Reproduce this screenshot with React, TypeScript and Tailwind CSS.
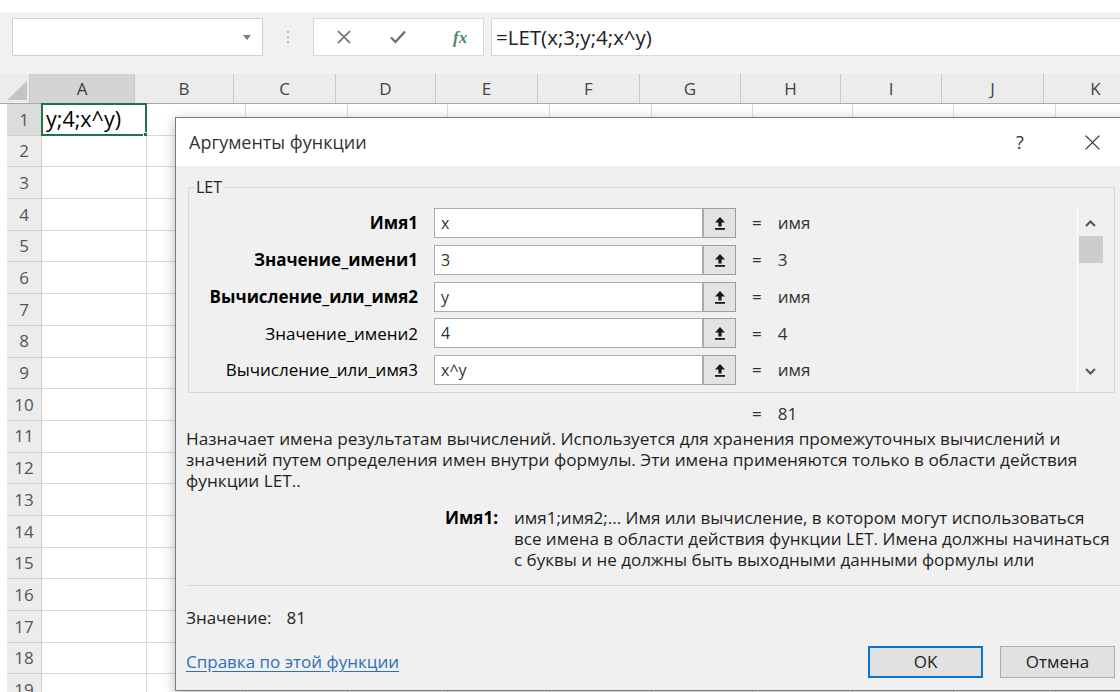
import React from 'react';

const COLS = [
  { id: 'A', w: 'w-[105px]' },
  { id: 'B', w: 'w-[99px]' },
  { id: 'C', w: 'w-[102px]' },
  { id: 'D', w: 'w-[100px]' },
  { id: 'E', w: 'w-[102px]' },
  { id: 'F', w: 'w-[102px]' },
  { id: 'G', w: 'w-[101px]' },
  { id: 'H', w: 'w-[100px]' },
  { id: 'I', w: 'w-[101px]' },
  { id: 'J', w: 'w-[102px]' },
  { id: 'K', w: 'w-[104px]' },
];

const ROWS = Array.from({ length: 19 }, (_, i) => i + 1);

const ARGS = [
  { label: 'Имя1', bold: true, value: 'x', result: 'имя' },
  { label: 'Значение_имени1', bold: true, value: '3', result: '3' },
  { label: 'Вычисление_или_имя2', bold: true, value: 'y', result: 'имя' },
  { label: 'Значение_имени2', bold: false, value: '4', result: '4' },
  { label: 'Вычисление_или_имя3', bold: false, value: 'x^y', result: 'имя' },
];

const DESCRIPTION = [
  'Назначает имена результатам вычислений. Используется для хранения промежуточных вычислений и',
  'значений путем определения имен внутри формулы. Эти имена применяются только в области действия',
  'функции LET..',
];

const ARG_HELP = [
  'имя1;имя2;... Имя или вычисление, в котором могут использоваться',
  'все имена в области действия функции LET. Имена должны начинаться',
  'с буквы и не должны быть выходными данными формулы или',
];

function RefEditIcon() {
  return (
    <svg width="12" height="14" viewBox="0 0 12 14">
      <path d="M6 1 L11 6.5 H7.6 V10.5 H4.4 V6.5 H1 Z" fill="#1a1a1a" />
      <rect x="1" y="12" width="10" height="1.8" fill="#1a1a1a" />
    </svg>
  );
}

function FormulaBar() {
  return (
    <div className="h-[62px] bg-[#f1f1f1] flex items-start pt-[6px]">
      {/* name box */}
      <div className="ml-[12px] w-[251px] h-[38px] bg-white border border-[#d0d0d0] flex items-center justify-end pr-[11px]">
        <svg width="8" height="5" viewBox="0 0 8 5">
          <path d="M0 0 H8 L4 5 Z" fill="#7a7a7a" />
        </svg>
      </div>
      <div className="w-[50px] h-[38px] flex flex-col items-center justify-center gap-[3px]">
        <span className="w-[2px] h-[2px] bg-[#b5b5b5]" />
        <span className="w-[2px] h-[2px] bg-[#b5b5b5]" />
        <span className="w-[2px] h-[2px] bg-[#b5b5b5]" />
      </div>
      {/* cancel / enter / insert function */}
      <div className="w-[171px] h-[38px] bg-white border border-[#d8d8d8] flex items-center">
        <svg className="ml-[22px]" width="16" height="16" viewBox="0 0 16 16">
          <path d="M2 2 L14 14 M14 2 L2 14" stroke="#6a6a6a" strokeWidth="1.7" />
        </svg>
        <svg className="ml-[37px]" width="18" height="16" viewBox="0 0 18 16">
          <path d="M2 8.5 L6.5 13 L16 2.5" stroke="#6a6a6a" strokeWidth="2.2" fill="none" />
        </svg>
        <span className="ml-[46px] font-['Liberation_Serif',serif] italic font-bold text-[17px] text-[#4a8a62] leading-none">
          fx
        </span>
      </div>
      <div className="ml-[7px] flex-1 h-[38px] bg-white border border-r-0 border-[#d8d8d8] flex items-center pl-[4px] text-[20.5px] text-[#222]">
        =LET(x;3;y;4;x^y)
      </div>
    </div>
  );
}

function ColumnHeaders() {
  return (
    <div className="h-[30px] flex pl-[7px] bg-[#ececec] border-b border-[#a8a8a8]">
      <div className="w-[35px] h-full border-r border-[#c8c8c8] flex items-end justify-end pr-[2px] pb-[3px]">
        <svg width="20" height="19" viewBox="0 0 20 19">
          <path d="M20 0 V19 H0 Z" fill="#c4c4c4" />
        </svg>
      </div>
      {COLS.map((c) => (
        <div
          key={c.id}
          className={`${c.w} shrink-0 h-full border-r border-[#c8c8c8] flex items-center justify-center text-[17px] ${
            c.id === 'A' ? 'bg-[#d4d4d4] text-[#3d3d3d]' : 'text-[#444]'
          }`}
        >
          {c.id}
        </div>
      ))}
    </div>
  );
}

function Grid() {
  return (
    <div className="pl-[7px]">
      {ROWS.map((r) => (
        <div key={r} className="h-[31.7px] flex">
          <div
            className={`w-[35px] shrink-0 border-r border-b border-[#cfcfcf] flex items-center justify-center text-[17px] text-[#555] ${
              r === 1 ? 'bg-[#dcdcdc]' : 'bg-[#ececec]'
            }`}
          >
            {r}
          </div>
          {COLS.map((c) => (
            <div
              key={c.id}
              className={`${c.w} shrink-0 relative border-r border-b border-[#dadada] bg-white`}
            >
              {r === 1 && c.id === 'A' && (
                <>
                  <span className="absolute left-[4px] top-0 bottom-0 flex items-center text-[21.5px] text-black whitespace-nowrap">
                    y;4;x^y)
                  </span>
                  <span className="absolute -left-[1px] -top-[1px] right-[-1px] bottom-[-1px] border-2 border-[#217346]" />
                  <span className="absolute right-[-4px] bottom-[-4px] w-[7px] h-[7px] bg-[#217346] border border-white" />
                </>
              )}
            </div>
          ))}
        </div>
      ))}
    </div>
  );
}

function ArgRow({ label, bold, value, result }: (typeof ARGS)[number]) {
  return (
    <div className="h-[30px] flex items-center text-[17px]">
      <div className={`w-[229px] text-right text-black whitespace-nowrap ${bold ? 'font-bold' : ''}`}>{label}</div>
      <div className="ml-[16px] w-[269px] h-[30px] bg-white border border-[#ababab] flex items-center pl-[6px] text-[16px] text-[#333]">
        {value}
      </div>
      <div className="w-[33px] h-[30px] bg-[#e3e3e3] border border-[#9d9d9d] border-l-[#ababab] flex items-center justify-center">
        <RefEditIcon />
      </div>
      <span className="ml-[16px] text-[#333]">=</span>
      <span className="ml-[16px] text-[#333]">{result}</span>
    </div>
  );
}

function Scrollbar() {
  return (
    <div className="w-[26px] h-[182px] border-l border-white flex flex-col items-center pt-[12px] pb-[15px]">
      <svg width="11" height="7" viewBox="0 0 11 7">
        <path d="M1 6 L5.5 1.5 L10 6" stroke="#555" strokeWidth="2" fill="none" />
      </svg>
      <div className="mt-[9px] w-[24px] h-[27px] bg-[#cdcdcd]" />
      <svg className="mt-auto" width="11" height="7" viewBox="0 0 11 7">
        <path d="M1 1 L5.5 5.5 L10 1" stroke="#555" strokeWidth="2" fill="none" />
      </svg>
    </div>
  );
}

function FunctionArgumentsDialog() {
  return (
    <div className="absolute left-[175px] top-[117px] w-[954px] h-[574px] bg-[#f0f0f0] border border-[#7c7c7c] shadow-[0_3px_12px_rgba(0,0,0,0.28)] flex flex-col">
      <div className="h-[48px] shrink-0 bg-white flex items-center pl-[13px] pr-[26px] text-[#333]">
        <span className="flex-1 text-[18px]">Аргументы функции</span>
        <span className="w-[20px] text-center text-[18px]">?</span>
        <span className="ml-[52px] w-[20px] flex justify-center">
          <svg width="17" height="17" viewBox="0 0 16 16">
            <path d="M1.5 1.5 L14.5 14.5 M14.5 1.5 L1.5 14.5" stroke="#333" strokeWidth="1.2" />
          </svg>
        </span>
      </div>

      <div className="pl-[10px] w-[939px] flex flex-col text-[17px] text-[#1f1f1f]">
        <div className="relative ml-[2px] mt-[21px] w-[927px] h-[206px] border border-[#d6d6d6] flex pt-[20px]">
          <span className="absolute left-[5px] -top-[12px] px-[2px] bg-[#f0f0f0] text-[16px] leading-[22px] text-[#222]">
            LET
          </span>
          <div className="w-[888px] flex flex-col gap-[6.75px]">
            {ARGS.map((a) => (
              <ArgRow key={a.label} {...a} />
            ))}
          </div>
          <Scrollbar />
        </div>

        <div className="mt-[11px] h-[20px] flex items-center pl-[566px] text-[#333]">
          <span>=</span>
          <span className="ml-[16px]">81</span>
        </div>

        <div className="mt-[4px] leading-[21px] text-[17.2px]">
          {DESCRIPTION.map((line) => (
            <div key={line} className="whitespace-nowrap">
              {line}
            </div>
          ))}
        </div>

        <div className="mt-[16px] flex leading-[21px]">
          <div className="w-[312px] text-right font-bold text-black">Имя1:</div>
          <div className="ml-[16px]">
            {ARG_HELP.map((line) => (
              <div key={line} className="whitespace-nowrap">
                {line}
              </div>
            ))}
          </div>
        </div>

        <div className="mt-[15px] h-px w-[940px] bg-[#dadada]" />

        <div className="mt-[22px] leading-[20px]">
          Значение:<span className="ml-[15px]">81</span>
        </div>

        <div className="mt-[18px] h-[32px] w-[929px] flex items-center">
          <span className="text-[#2f6fb7] underline underline-offset-[3px]">Справка по этой функции</span>
          <button className="ml-auto w-[115px] h-[32px] bg-[#e1e1e1] border-2 border-[#0a74d2] text-[17px] text-[#222]">
            OK
          </button>
          <button className="ml-[17px] w-[115px] h-[32px] bg-[#e1e1e1] border border-[#adadad] text-[17px] text-[#222]">
            Отмена
          </button>
        </div>
      </div>
    </div>
  );
}

export default function App() {
  return (
    <div className="relative w-[1120px] h-[692px] overflow-hidden bg-white font-['Open_Sans','Noto_Sans',sans-serif]">
      <div className="h-[12px]" />
      <FormulaBar />
      <ColumnHeaders />
      <Grid />
      <FunctionArgumentsDialog />
    </div>
  );
}
